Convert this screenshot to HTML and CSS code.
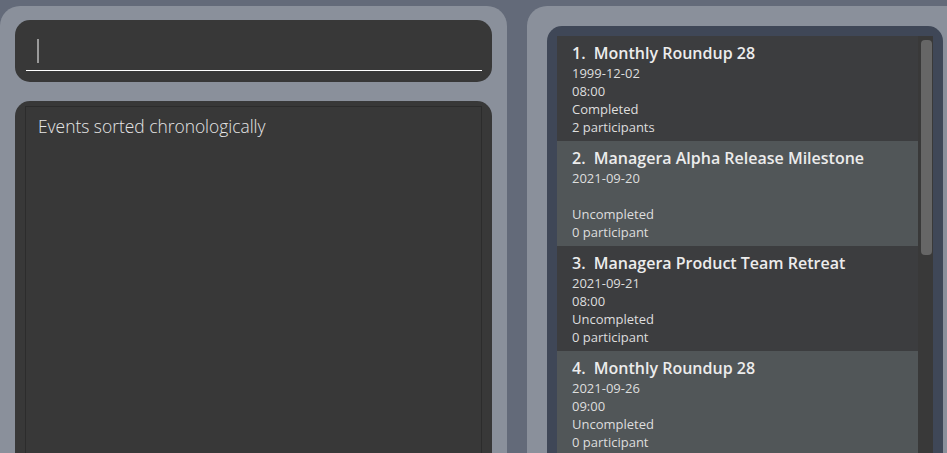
FILE: index.html
```html
<!DOCTYPE html>
<html>
<head>
<meta charset="utf-8">
<link rel="stylesheet" href="styles.css">
</head>
<body>
<div class="app">
  <div class="left-panel">
    <div class="command-box">
      <div class="command-field">
        <span class="caret"></span>
      </div>
    </div>
    <div class="result-box">
      <div class="result-inner">
        <p class="result-text">Events sorted chronologically</p>
      </div>
    </div>
  </div>
  <div class="right-panel">
    <div class="list-frame">
      <div class="list">
        <div class="cards">
          <div class="card dark">
            <div class="title">1.&nbsp; Monthly Roundup 28</div>
            <div class="line">1999-12-02</div>
            <div class="line">08:00</div>
            <div class="line">Completed</div>
            <div class="line">2 participants</div>
          </div>
          <div class="card light">
            <div class="title">2.&nbsp; Managera Alpha Release Milestone</div>
            <div class="line">2021-09-20</div>
            <div class="line"></div>
            <div class="line">Uncompleted</div>
            <div class="line">0 participant</div>
          </div>
          <div class="card dark">
            <div class="title">3.&nbsp; Managera Product Team Retreat</div>
            <div class="line">2021-09-21</div>
            <div class="line">08:00</div>
            <div class="line">Uncompleted</div>
            <div class="line">0 participant</div>
          </div>
          <div class="card light">
            <div class="title">4.&nbsp; Monthly Roundup 28</div>
            <div class="line">2021-09-26</div>
            <div class="line">09:00</div>
            <div class="line">Uncompleted</div>
            <div class="line">0 participant</div>
          </div>
        </div>
        <div class="scrollbar">
          <div class="thumb"></div>
        </div>
      </div>
    </div>
  </div>
</div>
</body>
</html>
```

FILE: styles.css
```css
html, body {
  margin: 0;
  padding: 0;
  height: 100%;
  overflow: hidden;
}
body {
  background: #636a79;
  font-family: "Open Sans", "Noto Sans", sans-serif;
}
.app {
  display: flex;
  gap: 20px;
  padding-top: 6px;
  height: 100%;
  box-sizing: border-box;
}
.left-panel {
  width: 507px;
  flex: none;
  background: #8a909b;
  border-radius: 20px 20px 0 0;
  padding: 14px 15px 0 15px;
  box-sizing: border-box;
  display: flex;
  flex-direction: column;
  gap: 19px;
}
.command-box {
  height: 62px;
  background: #383838;
  border-radius: 15px;
  padding: 0 10px 0 11px;
  box-sizing: border-box;
}
.command-field {
  height: 51px;
  border-bottom: 1px solid #ffffff;
  padding: 19px 0 0 11px;
  box-sizing: border-box;
}
.caret {
  display: block;
  width: 2px;
  height: 24px;
  background: #9a9a9a;
}
.result-box {
  flex: 1;
  background: #383838;
  border-radius: 15px 15px 0 0;
  padding: 5px 10px 0 10px;
  display: flex;
}
.result-inner {
  flex: 1;
  border: 1px solid #2c2c2c;
  border-bottom: none;
  padding: 9px 12px;
}
.result-text {
  margin: 0;
  font-size: 17.4px;
  font-weight: 300;
  line-height: 20px;
  color: #e6e6e6;
}
.right-panel {
  width: 440px;
  flex: none;
  background: #8a909b;
  border-radius: 20px 0 0 0;
  padding: 20px 0 0 20px;
  box-sizing: border-box;
}
.list-frame {
  width: 396px;
  height: 100%;
  background: #3f4757;
  border-radius: 15px 15px 0 0;
  padding: 10px 10px 0 10px;
  box-sizing: border-box;
}
.list {
  display: flex;
  height: 100%;
}
.cards {
  flex: 1;
}
.card {
  height: 105px;
  padding: 6px 15px 0 15px;
  box-sizing: border-box;
  color: #dedede;
}
.card.dark {
  background: #3c3d3f;
}
.card.light {
  background: #515658;
}
.title {
  font-size: 16px;
  font-weight: 600;
  line-height: 22px;
  color: #ececec;
  white-space: pre;
}
.line {
  font-size: 13px;
  line-height: 18px;
  height: 18px;
}
.scrollbar {
  width: 15px;
  background: #393939;
  padding: 4px 1px 0 3px;
  box-sizing: border-box;
}
.thumb {
  height: 215px;
  background: #666666;
  border-radius: 4px;
}
```
